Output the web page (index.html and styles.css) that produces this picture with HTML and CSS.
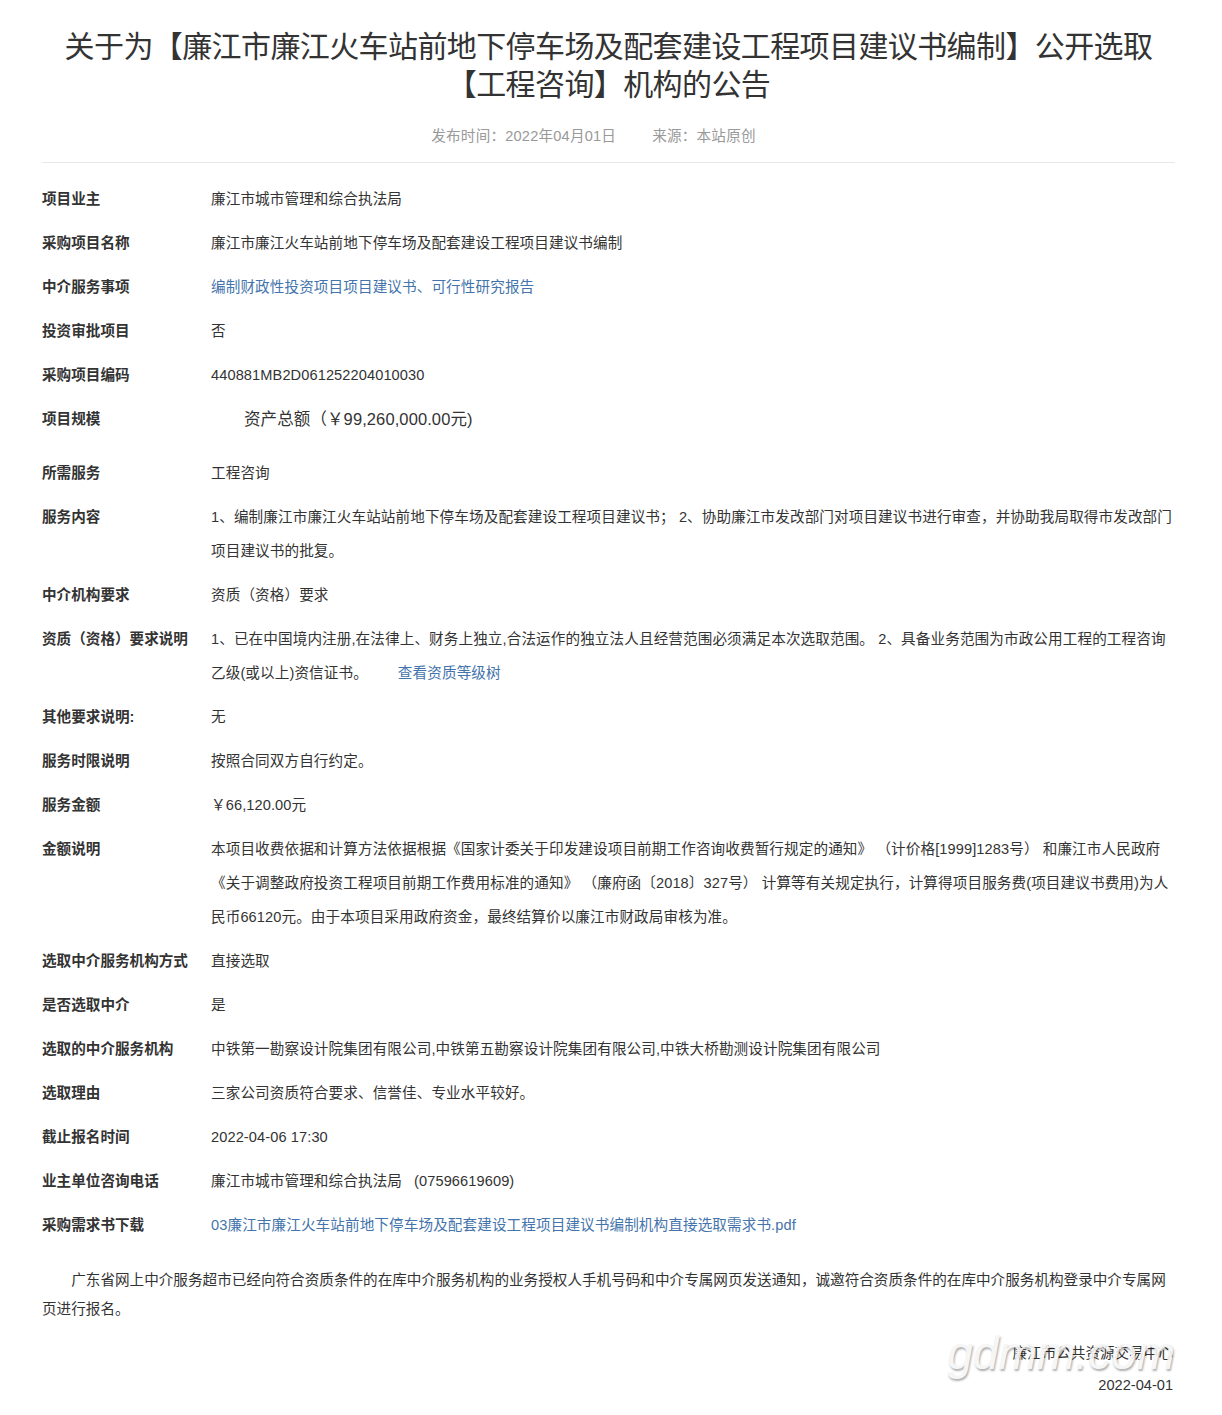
FILE: index.html
```html
<!DOCTYPE html>
<html lang="zh-CN">
<head>
<meta charset="utf-8">
<title>公告</title>
<link rel="stylesheet" href="styles.css">
</head>
<body>
<div class="page">
  <h1 class="title">关于为【廉江市廉江火车站前地下停车场及配套建设工程项目建议书编制】公开选取【工程咨询】机构的公告</h1>
  <div class="meta"><span>发布时间：2022年04月01日</span><span>来源：本站原创</span></div>

  <div class="table">
    <div class="row"><div class="label">项目业主</div><div class="value">廉江市城市管理和综合执法局</div></div>
    <div class="row"><div class="label">采购项目名称</div><div class="value">廉江市廉江火车站前地下停车场及配套建设工程项目建议书编制</div></div>
    <div class="row"><div class="label">中介服务事项</div><div class="value link">编制财政性投资项目项目建议书、可行性研究报告</div></div>
    <div class="row"><div class="label">投资审批项目</div><div class="value">否</div></div>
    <div class="row"><div class="label">采购项目编码</div><div class="value">440881MB2D061252204010030</div></div>
    <div class="row row-scale"><div class="label">项目规模</div><div class="value"><span class="scale">资产总额（￥99,260,000.00元)</span></div></div>
    <div class="row"><div class="label">所需服务</div><div class="value">工程咨询</div></div>
    <div class="row"><div class="label">服务内容</div><div class="value">1、编制廉江市廉江火车站站前地下停车场及配套建设工程项目建议书； 2、协助廉江市发改部门对项目建议书进行审查，并协助我局取得市发改部门项目建议书的批复。</div></div>
    <div class="row"><div class="label">中介机构要求</div><div class="value">资质（资格）要求</div></div>
    <div class="row"><div class="label">资质（资格）要求说明</div><div class="value">1、已在中国境内注册,在法律上、财务上独立,合法运作的独立法人且经营范围必须满足本次选取范围。 2、具备业务范围为市政公用工程的工程咨询乙级(或以上)资信证书。<a class="link more">查看资质等级树</a></div></div>
    <div class="row"><div class="label">其他要求说明:</div><div class="value">无</div></div>
    <div class="row"><div class="label">服务时限说明</div><div class="value">按照合同双方自行约定。</div></div>
    <div class="row"><div class="label">服务金额</div><div class="value">￥66,120.00元</div></div>
    <div class="row"><div class="label">金额说明</div><div class="value">本项目收费依据和计算方法依据根据《国家计委关于印发建设项目前期工作咨询收费暂行规定的通知》 （计价格[1999]1283号） 和廉江市人民政府《关于调整政府投资工程项目前期工作费用标准的通知》 （廉府函〔2018〕327号） 计算等有关规定执行，计算得项目服务费(项目建议书费用)为人民币66120元。由于本项目采用政府资金，最终结算价以廉江市财政局审核为准。</div></div>
    <div class="row"><div class="label">选取中介服务机构方式</div><div class="value">直接选取</div></div>
    <div class="row"><div class="label">是否选取中介</div><div class="value">是</div></div>
    <div class="row"><div class="label">选取的中介服务机构</div><div class="value">中铁第一勘察设计院集团有限公司,中铁第五勘察设计院集团有限公司,中铁大桥勘测设计院集团有限公司</div></div>
    <div class="row"><div class="label">选取理由</div><div class="value">三家公司资质符合要求、信誉佳、专业水平较好。</div></div>
    <div class="row"><div class="label">截止报名时间</div><div class="value">2022-04-06 17:30</div></div>
    <div class="row"><div class="label">业主单位咨询电话</div><div class="value">廉江市城市管理和综合执法局<span class="phone">(07596619609)</span></div></div>
    <div class="row"><div class="label">采购需求书下载</div><div class="value link">03廉江市廉江火车站前地下停车场及配套建设工程项目建议书编制机构直接选取需求书.pdf</div></div>
  </div>

  <p class="notice">广东省网上中介服务超市已经向符合资质条件的在库中介服务机构的业务授权人手机号码和中介专属网页发送通知，诚邀符合资质条件的在库中介服务机构登录中介专属网页进行报名。</p>

  <div class="sign">
    <div class="org">廉江市公共资源交易中心</div>
    <div class="date">2022-04-01</div>
    <div class="watermark">gdmm.com</div>
  </div>
</div>
</body>
</html>
```
FILE: styles.css
```css
html, body {
  margin: 0;
  padding: 0;
  background: #fff;
}

body {
  font-family: "Liberation Sans", "Noto Sans CJK SC", sans-serif;
  color: #333;
  font-size: 14.6px;
}

.page {
  width: 1133px;
  margin-left: 42px;
}

.title {
  margin: 28px 0 0;
  font-size: 30px;
  font-weight: 400;
  line-height: 38px;
  text-align: center;
  color: #333;
  letter-spacing: -0.6px;
}

.meta {
  margin-top: 22px;
  padding: 0 30px 16px 0;
  border-bottom: 1px solid #e8e8e8;
  display: flex;
  justify-content: center;
  gap: 36px;
  font-size: 14.6px;
  line-height: 20px;
  color: #999;
  letter-spacing: 0.2px;
}

.table {
  margin-top: 14px;
}

.row {
  display: flex;
  padding: 5px 0;
  line-height: 34px;
}

.label {
  width: 169px;
  flex: none;
  font-weight: 700;
  color: #333;
}

.value {
  flex: 1;
  min-width: 0;
  color: #333;
  letter-spacing: 0.1px;
}

.link {
  color: #4474ac;
  text-decoration: none;
}

.more {
  margin-left: 30px;
}

.row-scale {
  padding-bottom: 14px;
}

.scale {
  padding-left: 33px;
  font-size: 16.5px;
}

.phone {
  margin-left: 12px;
}

.notice {
  margin: 18.5px 0 0;
  line-height: 29px;
  text-indent: 2em;
}

.sign {
  position: relative;
  margin-top: 13px;
  text-align: right;
  line-height: 32px;
  padding-right: 2px;
}

.watermark {
  position: absolute;
  right: 0;
  top: -10px;
  font-size: 46px;
  font-style: italic;
  line-height: 52px;
  color: #f6f6f6;
  opacity: 0.9;
  text-shadow: 1px 2px 2px rgba(0, 0, 0, 0.35);
}
```
